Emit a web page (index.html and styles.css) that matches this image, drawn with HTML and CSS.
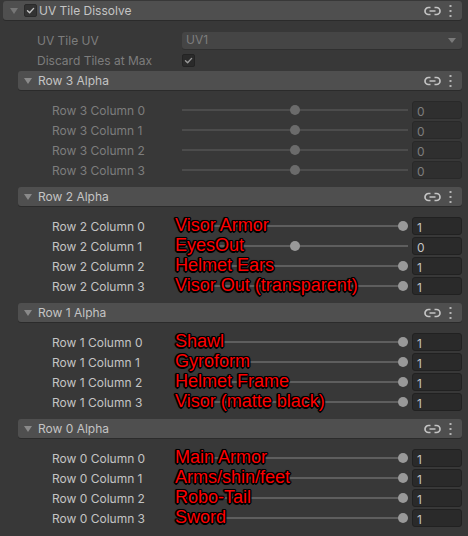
FILE: index.html
```html
<!DOCTYPE html>
<html>
<head>
<meta charset="utf-8">
<title>UV Tile Dissolve</title>
<link rel="stylesheet" href="styles.css">
</head>
<body>
<div class="inspector">

  <div class="header header-main">
    <span class="fold"></span>
    <span class="check check-header">
      <svg viewBox="0 0 13 13" width="13" height="13"><path d="M3.5 6.8 L5.6 8.8 L9.6 4.4" fill="none" stroke="currentColor" stroke-width="1.4" stroke-linecap="round" stroke-linejoin="round"/></svg>
    </span>
    <span class="title">UV Tile Dissolve</span>
    <span class="tools">
      <svg class="link" viewBox="0 0 17 10" width="17" height="10"><path d="M6.5 1.5 H4.5 a3.5 3.5 0 0 0 0 7 H6.5 M10.5 1.5 H12.5 a3.5 3.5 0 0 1 0 7 H10.5 M5.5 5 H11.5" fill="none" stroke="currentColor" stroke-width="1.7"/></svg>
      <svg class="kebab" viewBox="0 0 3 12" width="3" height="12"><rect x="0.5" y="0" width="2" height="2"/><rect x="0.5" y="5" width="2" height="2"/><rect x="0.5" y="10" width="2" height="2"/></svg>
    </span>
  </div>

  <div class="props disabled">
    <div class="row row-top">
      <span class="label">UV Tile UV</span>
      <div class="dropdown"><span>UV1</span><span class="caret"></span></div>
    </div>
    <div class="row row-top">
      <span class="label">Discard Tiles at Max</span>
      <span class="check check-field">
        <svg viewBox="0 0 13 13" width="13" height="13"><path d="M3.5 6.8 L5.6 8.8 L9.6 4.4" fill="none" stroke="currentColor" stroke-width="1.4" stroke-linecap="round" stroke-linejoin="round"/></svg>
      </span>
    </div>
  </div>

  <section class="group disabled">
    <div class="header header-sub">
      <span class="fold"></span>
      <span class="title">Row 3 Alpha</span>
      <span class="tools">
        <svg class="link" viewBox="0 0 17 10" width="17" height="10"><path d="M6.5 1.5 H4.5 a3.5 3.5 0 0 0 0 7 H6.5 M10.5 1.5 H12.5 a3.5 3.5 0 0 1 0 7 H10.5 M5.5 5 H11.5" fill="none" stroke="currentColor" stroke-width="1.7"/></svg>
        <svg class="kebab" viewBox="0 0 3 12" width="3" height="12"><rect x="0.5" y="0" width="2" height="2"/><rect x="0.5" y="5" width="2" height="2"/><rect x="0.5" y="10" width="2" height="2"/></svg>
      </span>
    </div>
    <div class="rows">
      <div class="row"><span class="label">Row 3 Column 0</span><div class="slider" style="--v:0.5"><span class="track"></span><span class="thumb"></span></div><span class="num">0</span></div>
      <div class="row"><span class="label">Row 3 Column 1</span><div class="slider" style="--v:0.5"><span class="track"></span><span class="thumb"></span></div><span class="num">0</span></div>
      <div class="row"><span class="label">Row 3 Column 2</span><div class="slider" style="--v:0.5"><span class="track"></span><span class="thumb"></span></div><span class="num">0</span></div>
      <div class="row"><span class="label">Row 3 Column 3</span><div class="slider" style="--v:0.5"><span class="track"></span><span class="thumb"></span></div><span class="num">0</span></div>
    </div>
  </section>

  <section class="group">
    <div class="header header-sub">
      <span class="fold"></span>
      <span class="title">Row 2 Alpha</span>
      <span class="tools">
        <svg class="link" viewBox="0 0 17 10" width="17" height="10"><path d="M6.5 1.5 H4.5 a3.5 3.5 0 0 0 0 7 H6.5 M10.5 1.5 H12.5 a3.5 3.5 0 0 1 0 7 H10.5 M5.5 5 H11.5" fill="none" stroke="currentColor" stroke-width="1.7"/></svg>
        <svg class="kebab" viewBox="0 0 3 12" width="3" height="12"><rect x="0.5" y="0" width="2" height="2"/><rect x="0.5" y="5" width="2" height="2"/><rect x="0.5" y="10" width="2" height="2"/></svg>
      </span>
    </div>
    <div class="rows">
      <div class="row"><span class="label">Row 2 Column 0</span><div class="slider" style="--v:1"><span class="track"></span><span class="thumb"></span></div><span class="num">1</span><span class="note">Visor Armor</span></div>
      <div class="row"><span class="label">Row 2 Column 1</span><div class="slider" style="--v:0.5"><span class="track"></span><span class="thumb"></span></div><span class="num">0</span><span class="note">EyesOut</span></div>
      <div class="row"><span class="label">Row 2 Column 2</span><div class="slider" style="--v:1"><span class="track"></span><span class="thumb"></span></div><span class="num">1</span><span class="note">Helmet Ears</span></div>
      <div class="row"><span class="label">Row 2 Column 3</span><div class="slider" style="--v:1"><span class="track"></span><span class="thumb"></span></div><span class="num">1</span><span class="note">Visor Out (transparent)</span></div>
    </div>
  </section>

  <section class="group">
    <div class="header header-sub">
      <span class="fold"></span>
      <span class="title">Row 1 Alpha</span>
      <span class="tools">
        <svg class="link" viewBox="0 0 17 10" width="17" height="10"><path d="M6.5 1.5 H4.5 a3.5 3.5 0 0 0 0 7 H6.5 M10.5 1.5 H12.5 a3.5 3.5 0 0 1 0 7 H10.5 M5.5 5 H11.5" fill="none" stroke="currentColor" stroke-width="1.7"/></svg>
        <svg class="kebab" viewBox="0 0 3 12" width="3" height="12"><rect x="0.5" y="0" width="2" height="2"/><rect x="0.5" y="5" width="2" height="2"/><rect x="0.5" y="10" width="2" height="2"/></svg>
      </span>
    </div>
    <div class="rows">
      <div class="row"><span class="label">Row 1 Column 0</span><div class="slider" style="--v:1"><span class="track"></span><span class="thumb"></span></div><span class="num">1</span><span class="note">Shawl</span></div>
      <div class="row"><span class="label">Row 1 Column 1</span><div class="slider" style="--v:1"><span class="track"></span><span class="thumb"></span></div><span class="num">1</span><span class="note">Gyroform</span></div>
      <div class="row"><span class="label">Row 1 Column 2</span><div class="slider" style="--v:1"><span class="track"></span><span class="thumb"></span></div><span class="num">1</span><span class="note">Helmet Frame</span></div>
      <div class="row"><span class="label">Row 1 Column 3</span><div class="slider" style="--v:1"><span class="track"></span><span class="thumb"></span></div><span class="num">1</span><span class="note">Visor (matte black)</span></div>
    </div>
  </section>

  <section class="group">
    <div class="header header-sub">
      <span class="fold"></span>
      <span class="title">Row 0 Alpha</span>
      <span class="tools">
        <svg class="link" viewBox="0 0 17 10" width="17" height="10"><path d="M6.5 1.5 H4.5 a3.5 3.5 0 0 0 0 7 H6.5 M10.5 1.5 H12.5 a3.5 3.5 0 0 1 0 7 H10.5 M5.5 5 H11.5" fill="none" stroke="currentColor" stroke-width="1.7"/></svg>
        <svg class="kebab" viewBox="0 0 3 12" width="3" height="12"><rect x="0.5" y="0" width="2" height="2"/><rect x="0.5" y="5" width="2" height="2"/><rect x="0.5" y="10" width="2" height="2"/></svg>
      </span>
    </div>
    <div class="rows">
      <div class="row"><span class="label">Row 0 Column 0</span><div class="slider" style="--v:1"><span class="track"></span><span class="thumb"></span></div><span class="num">1</span><span class="note">Main Armor</span></div>
      <div class="row"><span class="label">Row 0 Column 1</span><div class="slider" style="--v:1"><span class="track"></span><span class="thumb"></span></div><span class="num">1</span><span class="note">Arms/shin/feet</span></div>
      <div class="row"><span class="label">Row 0 Column 2</span><div class="slider" style="--v:1"><span class="track"></span><span class="thumb"></span></div><span class="num">1</span><span class="note">Robo-Tail</span></div>
      <div class="row"><span class="label">Row 0 Column 3</span><div class="slider" style="--v:1"><span class="track"></span><span class="thumb"></span></div><span class="num">1</span><span class="note">Sword</span></div>
    </div>
  </section>

</div>
</body>
</html>
```

FILE: styles.css
```css
* { box-sizing: border-box; }

html, body {
  margin: 0;
  background: #383838;
}

body {
  font-family: Inter, "Noto Sans", sans-serif;
  font-size: 12px;
  color: #c4c4c4;
}

.inspector {
  width: 468px;
  height: 536px;
  padding: 1px 6px 0 0;
  overflow: hidden;
}

/* foldout headers */
.header {
  display: flex;
  align-items: center;
  height: 19px;
  background: #4f4f4f;
  border-radius: 3px;
  box-shadow: 0 1px 0 #2b2b2b;
}

.header-main {
  margin-left: 3px;
  padding-left: 7px;
}

.header-sub {
  margin-left: 18px;
  padding-left: 6px;
}

.fold {
  width: 0;
  height: 0;
  border-left: 4px solid transparent;
  border-right: 4px solid transparent;
  border-top: 6px solid #8a8a8a;
  flex: none;
}

.header-main .fold {
  border-top-color: #767676;
}

.header .title {
  color: #c4c4c4;
  margin-left: 6px;
  white-space: nowrap;
}

.header-main .title {
  margin-left: 2px;
}

.tools {
  margin-left: auto;
  display: flex;
  align-items: center;
  padding-right: 10px;
  color: #c4c4c4;
}

.tools .link {
  display: block;
}

.tools .kebab {
  display: block;
  margin-left: 8px;
  fill: #b4b4b4;
}

/* checkboxes */
.check {
  display: flex;
  width: 13px;
  height: 13px;
  border-radius: 2px;
  flex: none;
}

.check-header {
  margin-left: 6px;
  background: #333333;
  border: 1px solid #2a2a2a;
  color: #c4c4c4;
}

.check-header svg,
.check-field svg {
  margin: -1px;
}

.check-field {
  background: #2a2a2a;
  border: 1px solid #232323;
  color: #9a9a9a;
}

/* property rows */
.props {
  margin-top: 10px;
}

.row {
  position: relative;
  display: flex;
  align-items: center;
  height: 20px;
  line-height: 20px;
  padding-left: 52px;
}

.row .label {
  width: 130px;
  flex: none;
  padding-top: 1px;
  white-space: nowrap;
}

.row-top {
  padding-left: 37px;
}

.row-top .label {
  width: 145px;
}

.disabled .label,
.disabled .dropdown,
.disabled .num {
  color: #7d7d7d;
}

.dropdown {
  flex: 1;
  display: flex;
  align-items: center;
  justify-content: space-between;
  height: 17px;
  padding: 0 6px 0 4px;
  background: #454545;
  border-radius: 3px;
  box-shadow: 0 1px 0 #303030;
}

.caret {
  width: 0;
  height: 0;
  border-left: 4px solid transparent;
  border-right: 4px solid transparent;
  border-top: 5px solid #7a7a7a;
}

/* groups */
.group {
  margin-top: 7px;
}

.props + .group {
  margin-top: 1px;
}

.rows {
  margin-top: 10px;
}

.slider {
  position: relative;
  width: 226px;
  height: 20px;
  flex: none;
}

.slider .track {
  position: absolute;
  left: 0;
  right: 0;
  top: 9px;
  height: 2px;
  background: #5e5e5e;
}

.slider .thumb {
  position: absolute;
  top: 5px;
  left: calc(var(--v) * (100% - 10px));
  width: 10px;
  height: 10px;
  border-radius: 50%;
  background: #999999;
}

.disabled .slider .track {
  background: #4c4c4c;
}

.disabled .slider .thumb {
  background: #6b6b6b;
}

.num {
  margin-left: 4px;
  width: 50px;
  height: 18px;
  line-height: 17px;
  padding-left: 4px;
  padding-top: 1px;
  background: #2a2a2a;
  border: 1px solid #212121;
  border-radius: 3px;
  flex: none;
  color: #c4c4c4;
}

.disabled .num {
  background: #2f2f2f;
  border-color: #292929;
}

/* red callouts written over the sliders */
.note {
  position: absolute;
  left: 175px;
  top: -1.5px;
  font-family: "Liberation Sans", Arial, sans-serif;
  font-size: 18px;
  line-height: 20px;
  color: #ff0000;
  white-space: nowrap;
  text-shadow:
    1.5px 0 0 #000, -1.5px 0 0 #000, 0 1.5px 0 #000, 0 -1.5px 0 #000,
    1px 1px 0 #000, -1px 1px 0 #000, 1px -1px 0 #000, -1px -1px 0 #000,
    0 0 2px #000;
}
```
